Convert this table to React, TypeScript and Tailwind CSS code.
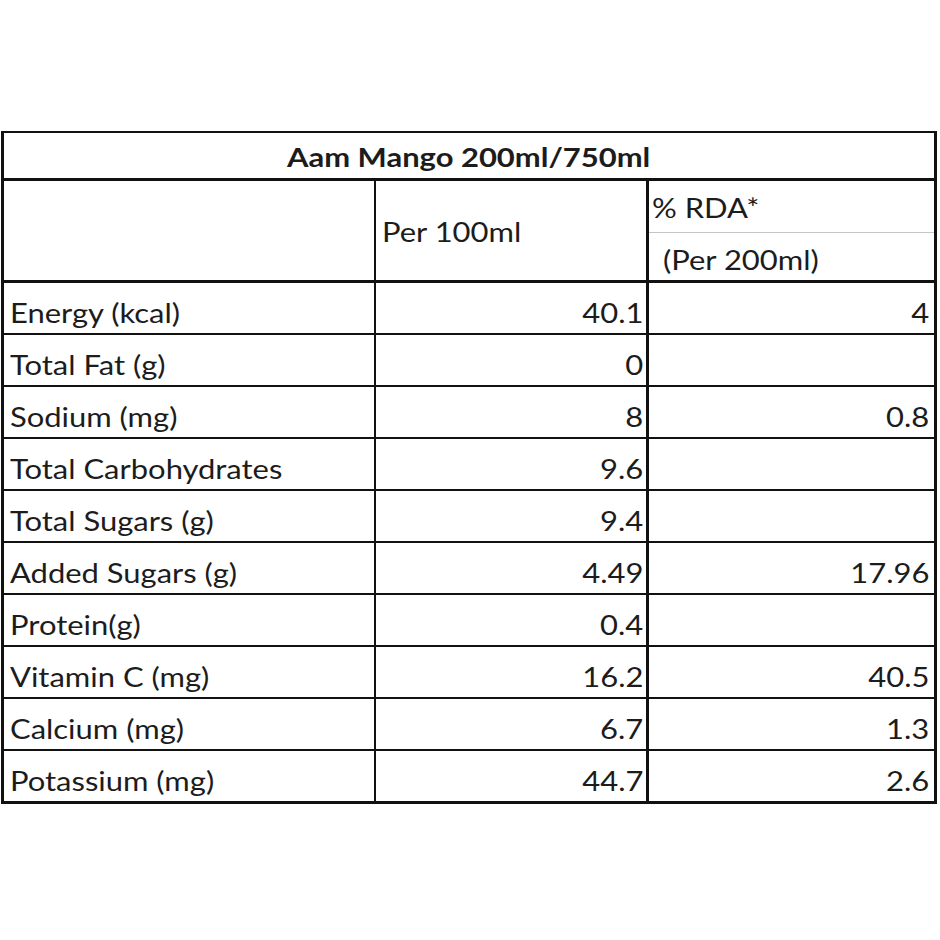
import React from "react";

const rows: [string, string, string][] = [
  ["Energy (kcal)", "40.1", "4"],
  ["Total Fat (g)", "0", ""],
  ["Sodium (mg)", "8", "0.8"],
  ["Total Carbohydrates", "9.6", ""],
  ["Total Sugars (g)", "9.4", ""],
  ["Added Sugars (g)", "4.49", "17.96"],
  ["Protein(g)", "0.4", ""],
  ["Vitamin C (mg)", "16.2", "40.5"],
  ["Calcium (mg)", "6.7", "1.3"],
  ["Potassium (mg)", "44.7", "2.6"],
];

function L({ children }: { children: React.ReactNode }) {
  return <span className="inline-block whitespace-nowrap scale-x-[1.19] origin-left">{children}</span>;
}
function R({ children }: { children: React.ReactNode }) {
  return <span className="inline-block whitespace-nowrap scale-x-[1.19] origin-right">{children}</span>;
}

export default function App() {
  return (
    <div
      className="w-[940px] h-[940px] bg-white pt-[131px] pl-[1px] text-[#1c1c1c] text-[26px] leading-[26px]"
      style={{ fontFamily: "Lato, 'Open Sans', sans-serif" }}
    >
      <div className="w-[936px] border-[3px] border-t-2 border-[#111]">
        <div className="h-[48px] flex items-center justify-center pt-[3px] font-bold border-b-[3px] border-[#111]">
          <span className="inline-block whitespace-nowrap scale-x-[1.19] origin-center">Aam Mango 200ml/750ml</span>
        </div>
        <div className="h-[102px] flex border-b-[3px] border-[#111]">
          <div className="w-[372px] border-r-2 border-[#111]" />
          <div className="w-[273px] border-r-[3px] border-[#111] pl-[6px] pt-[38px]">
            <L>Per 100ml</L>
          </div>
          <div className="flex-1 flex flex-col">
            <div className="h-[52px] pl-[3px] pt-[14px] border-b border-[#c4c4c4]">
              <L>% RDA*</L>
            </div>
            <div className="flex-1 pl-[14px] pt-[14px]">
              <L>(Per 200ml)</L>
            </div>
          </div>
        </div>
        {rows.map((r, i) => (
          <div
            key={i}
            className={`flex ${i > 0 ? "h-[52px] border-t-2 border-[#111]" : "h-[50px]"}`}
          >
            <div className="w-[372px] border-r-2 border-[#111] flex items-center pl-[6px] pt-[10px]">
              <L>{r[0]}</L>
            </div>
            <div className="w-[273px] border-r-[3px] border-[#111] flex items-center justify-end pr-[3px] pt-[10px]">
              <R>{r[1]}</R>
            </div>
            <div className="flex-1 flex items-center justify-end pr-[5px] pt-[10px]">
              <R>{r[2]}</R>
            </div>
          </div>
        ))}
      </div>
    </div>
  );
}
